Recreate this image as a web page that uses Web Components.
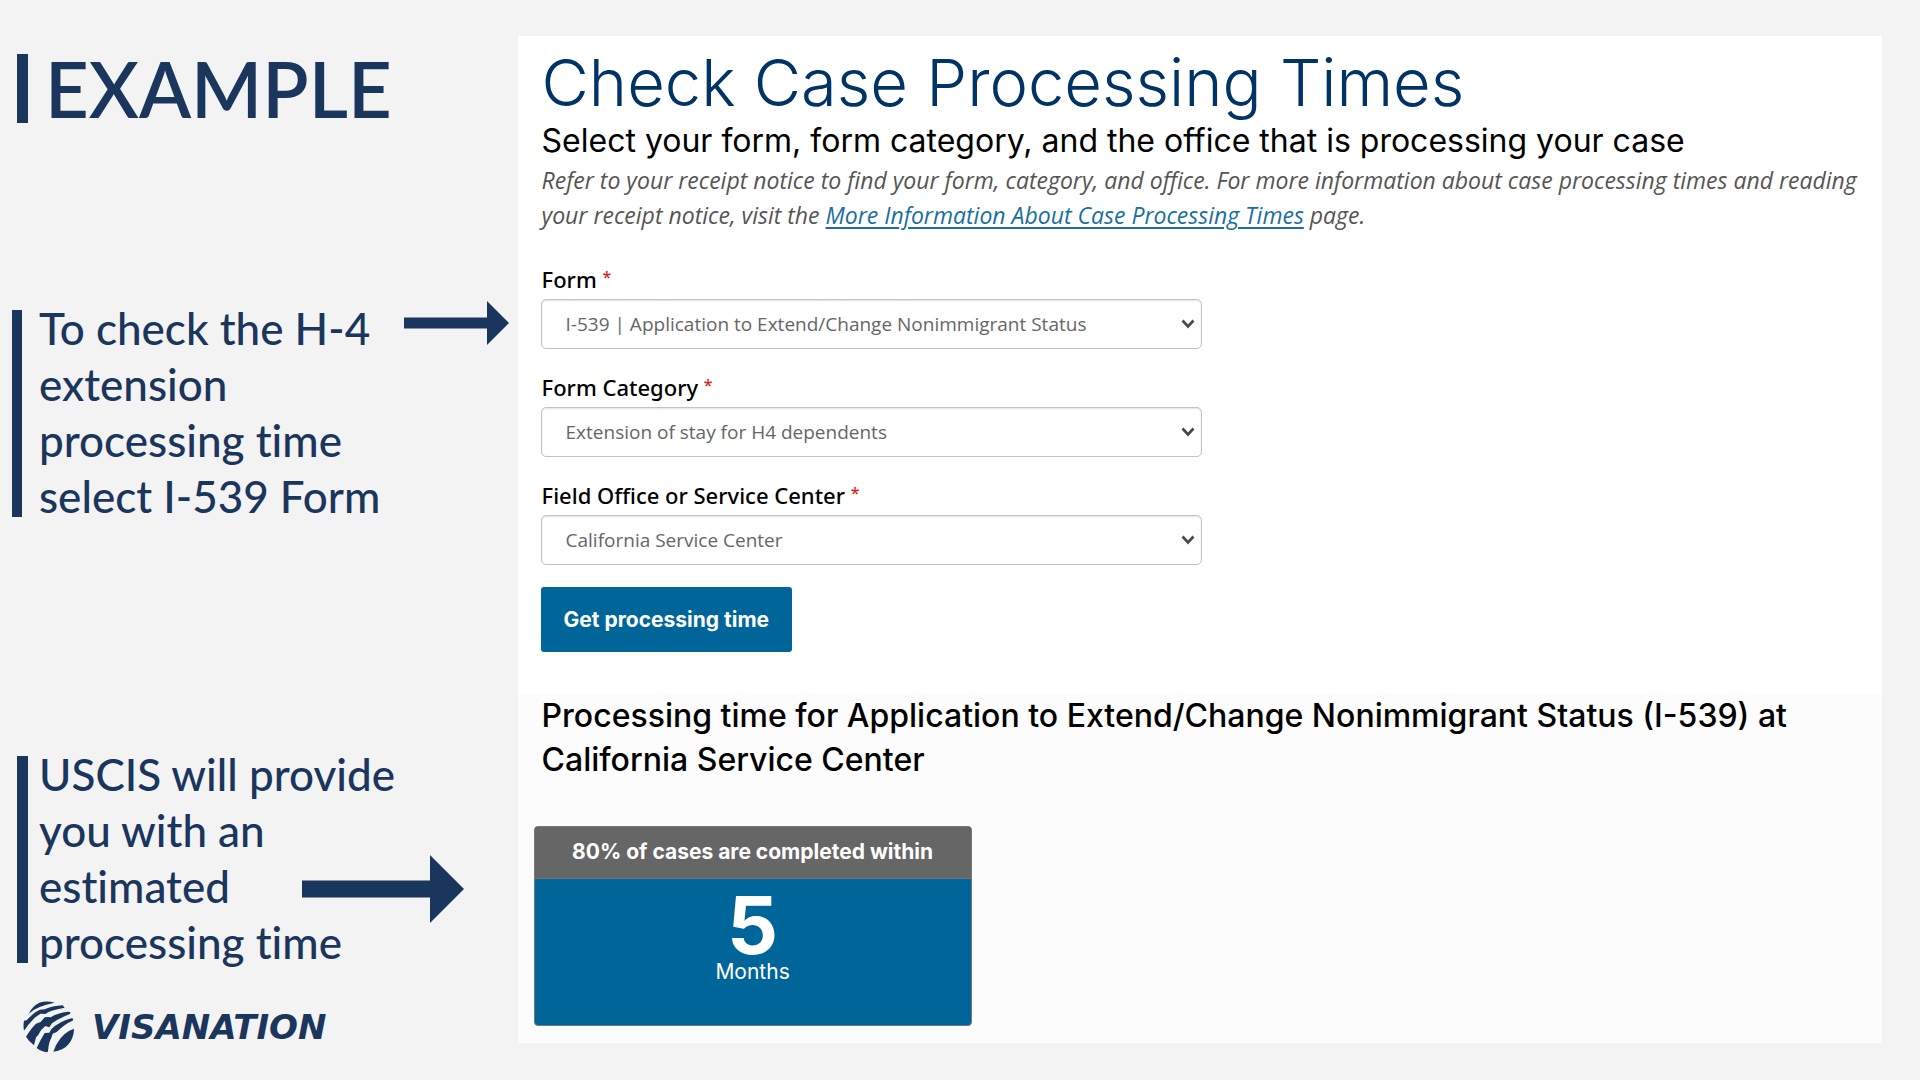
<!DOCTYPE html>
<html lang="en">
<head>
<meta charset="utf-8">
<title>Check Case Processing Times</title>
<style>
  body { margin: 0; background: #f3f3f3; }
</style>
</head>
<body>
<example-slide></example-slide>

<template id="slide">
  <style>
    :host {
      --navy: #1b365d;
      --blue: #006699;
      display: grid;
      grid-template-columns: 27.5% minmax(0, 1fr);
      min-height: 100vh;
      box-sizing: border-box;
      padding: 36px 38px 24px 0;
      background: #f3f3f3;
      color: #000;
      font-family: Inter, "Liberation Sans", sans-serif;
    }
    aside { display: flex; flex-direction: column; color: var(--navy); }
    h1 {
      margin: 18px 0 0 17px;
      padding-left: 17px;
      border-left: 11px solid var(--navy);
      font: 600 76px/69px Lato, sans-serif;
    }
    .first { margin-top: 177px; }
    .second { margin-top: 222px; }
    visa-logo { margin: 28px 0 0 20px; }
    main { display: flex; flex-direction: column; margin-bottom: 13px; background: #fff; }
    .query { padding: 0 20px 0 24px; height: 658px; box-sizing: border-box; }
    h2 { margin: 6px 0 0; font-size: 65px; line-height: 81px; font-weight: 300; color: #003366; }
    h3 { margin: 0; font-size: 32px; line-height: 36px; font-weight: 400; }
    p { margin: 4px 0 0; font: italic 23px/35px "Open Sans", sans-serif; color: #555; }
    a { color: #1a6f9f; text-decoration: underline; text-decoration-thickness: 2px; text-underline-offset: 3px; }
    form { display: flex; flex-direction: column; align-items: flex-start; gap: 22px; margin-top: 32px; }
    select-field + select-field { margin-top: 2px; }
    .result { flex: 1; padding: 0 20px 17px 16px; background: #fcfcfc; }
    .result h3 { padding-left: 8px; line-height: 44px; font-weight: 500; }
    time-card { margin-top: 44px; }
    button {
      height: 65px;
      margin-left: -1px;
      padding: 0 23px;
      border: 0;
      border-radius: 3px;
      background: var(--blue);
      color: #fff;
      font: 700 21px/28px Inter, sans-serif;
    }
  </style>
  <aside>
    <h1>EXAMPLE</h1>
    <side-note class="first">To check the H-4<br>extension<br>processing time<br>select I-539 Form
      <svg slot="arrow" style="margin:1px 0 0 365px" width="105" height="44" viewBox="0 0 105 44" aria-hidden="true"><path fill="#1b365d" d="M0 16.500H83V0L105 22 83 44V27.500H0Z"/></svg>
    </side-note>
    <side-note class="second indent">USCIS will provide<br>you with an<br>estimated<br>processing time
      <svg slot="arrow" style="margin:109px 0 0 263px" width="162" height="68" viewBox="0 0 162 68" aria-hidden="true"><path fill="#1b365d" d="M0 25.500H128V0L162 34 128 68V42.500H0Z"/></svg>
    </side-note>
    <visa-logo></visa-logo>
  </aside>
  <main>
    <section class="query">
      <h2>Check Case Processing Times</h2>
      <h3>Select your form, form category, and the office that is processing your case</h3>
      <p>Refer to your receipt notice to find your form, category, and office. For more information about case processing times and reading your receipt notice, visit the <a href="#">More Information About Case Processing Times</a> page.</p>
      <form>
        <select-field label="Form" value="I-539 | Application to Extend/Change Nonimmigrant Status"></select-field>
        <select-field label="Form Category" value="Extension of stay for H4 dependents"></select-field>
        <select-field label="Field Office or Service Center" value="California Service Center"></select-field>
        <button type="button">Get processing time</button>
      </form>
    </section>
    <section class="result">
      <h3>Processing time for Application to Extend/Change Nonimmigrant Status (I-539) at California Service Center</h3>
      <time-card><span slot="head">80% of cases are completed within</span><span slot="value">5</span><span slot="unit">Months</span></time-card>
    </section>
  </main>
</template>

<template id="note">
  <style>
    :host { display: grid; grid-template-columns: 12px 10px minmax(0, 1fr); }
    :host(.indent) { grid-template-columns: 17px 11px minmax(0, 1fr); }
    .bar { grid-area: 1 / 2; margin: 10px 0 7px; background: var(--navy); }
    .text, .arrow { grid-area: 1 / 1 / 2 / 4; padding-left: 39px; }
    .text { font: 500 44px/56px Lato, sans-serif; font-variant-ligatures: none; }
    ::slotted([slot="arrow"]) { display: block; }
  </style>
  <div class="bar"></div>
  <div class="text"><slot></slot></div>
  <div class="arrow"><slot name="arrow"></slot></div>
</template>

<template id="logo">
  <style>
    :host { display: flex; align-items: center; gap: 14px; color: var(--navy); font: italic 700 34px/40px "DejaVu Sans", sans-serif; }
    svg { flex: none; fill: currentColor; }
  </style>
  <svg width="58" height="58" viewBox="0 0 174 174" aria-hidden="true">
    <path d="M26 47Q50 24 104 14Q80 7 58 14Q36 25 26 47Z"/>
    <path d="M12 68L20 67Q42 42 60 35L74 34Q96 24 128 22L134 29Q104 34 86 42L76 48L62 47Q48 54 38 66Q24 80 12 98Q9 84 12 68Z"/>
    <path d="M18 116Q34 90 48 77L62 72L74 58Q84 56 92 58Q112 44 144 41L151 42L150 48Q114 62 96 76L88 88L76 84Q62 94 54 112L48 118L42 142Q26 130 18 116Z"/>
    <path d="M50 150Q62 124 74 105L88 104L94 94Q116 70 157 60L160 67Q132 80 110 102L98 107L94 120Q86 132 84 160L82 163Q62 160 50 150Z"/>
    <path d="M162 92Q132 102 114 132L108 142L100 161Q130 158 146 138Q162 118 162 92Z"/>
  </svg>
  <span>VISANATION</span>
</template>

<template id="field">
  <style>
    :host { display: block; width: 661px; max-width: 100%; margin-left: -1px; }
    label { display: block; padding-left: 1px; font: 500 22px/28px "Noto Sans", sans-serif; }
    sup { color: #e31c1c; font-size: 16px; line-height: 0; vertical-align: 5px; }
    .box { display: grid; align-items: center; margin-top: 6px; }
    select {
      grid-area: 1 / 1;
      appearance: none;
      width: 100%;
      height: 50px;
      padding: 0 40px 0 24px;
      border: 1px solid #c4c4c4;
      border-radius: 5px;
      background: #fff;
      box-shadow: inset 0 1px 2px rgba(0, 0, 0, .12);
      color: #666;
      font: 19px/28px "Open Sans", sans-serif;
    }
    svg { grid-area: 1 / 1; justify-self: end; margin-right: 7px; pointer-events: none; }
  </style>
  <label for="s"><span></span> <sup>*</sup></label>
  <div class="box">
    <select id="s"><option></option></select>
    <svg width="14" height="10" viewBox="0 0 14 10" aria-hidden="true"><path d="M1.500 1.500L7 7.500 12.500 1.500" fill="none" stroke="#484848" stroke-width="2.600"/></svg>
  </div>
</template>

<template id="card">
  <style>
    :host { display: block; width: 438px; max-width: 100%; box-sizing: border-box; border: 1px solid #777; border-radius: 4px; overflow: hidden; text-align: center; color: #fff; background: var(--blue); }
    .head { padding: 11px 0 12px; background: #666; border-bottom: 1px solid #777; font-size: 21px; line-height: 28px; font-weight: 700; }
    .body { padding: 12px 0 40px; }
    .value { font-size: 80px; line-height: 68px; font-weight: 700; }
    .unit { font-size: 21px; line-height: 26px; }
  </style>
  <div class="head"><slot name="head"></slot></div>
  <div class="body">
    <div class="value"><slot name="value"></slot></div>
    <div class="unit"><slot name="unit"></slot></div>
  </div>
</template>

<script>
  class Part extends HTMLElement {
    connectedCallback() {
      if (this.shadowRoot) return;
      const source = document.getElementById(this.constructor.source);
      this.attachShadow({ mode: 'open' }).append(source.content.cloneNode(true));
      this.fill(this.shadowRoot);
    }
    fill() {}
  }
  class SideNote extends Part { static source = 'note'; }
  class VisaLogo extends Part { static source = 'logo'; }
  class TimeCard extends Part { static source = 'card'; }
  class SelectField extends Part {
    static source = 'field';
    fill(root) {
      root.querySelector('label span').textContent = this.getAttribute('label');
      root.querySelector('option').textContent = this.getAttribute('value');
    }
  }
  class ExampleSlide extends Part { static source = 'slide'; }
  customElements.define('side-note', SideNote);
  customElements.define('visa-logo', VisaLogo);
  customElements.define('time-card', TimeCard);
  customElements.define('select-field', SelectField);
  customElements.define('example-slide', ExampleSlide);
</script>
</body>
</html>
